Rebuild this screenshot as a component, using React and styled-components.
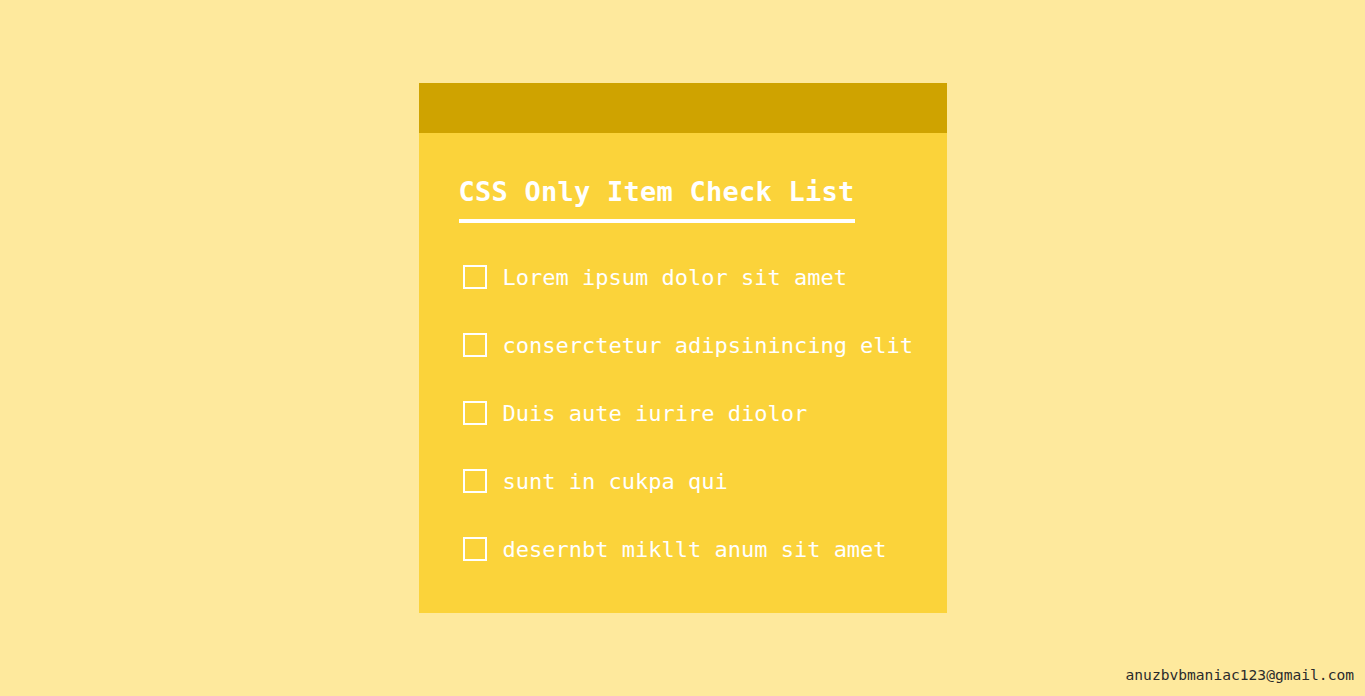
import React from "react";
import styled, { createGlobalStyle } from "styled-components";

const Global = createGlobalStyle`
  html, body { margin: 0; padding: 0; }
  body { background: #fee99d; font-family: "DejaVu Sans Mono", "Liberation Mono", monospace; }
`;

const Page = styled.div`
  height: 696px;
  display: grid;
  grid-template-rows: 1fr auto 1fr;
  justify-items: center;
`;

const Card = styled.section`
  grid-row: 2;
  width: 528px;
  background: #fbd33a;
  display: flex;
  flex-direction: column;
`;

const CardHeader = styled.div`
  height: 50px;
  background: #cfa300;
`;

const CardBody = styled.div`
  padding: 40px 40px 30px 40px;
  display: flex;
  flex-direction: column;
  align-items: flex-start;
`;

const Title = styled.h1`
  margin: 0;
  font-size: 27px;
  line-height: 37px;
  font-weight: bold;
  letter-spacing: 0.25px;
  color: #ffffff;
  padding-bottom: 9px;
  border-bottom: 4px solid #ffffff;
  white-space: nowrap;
`;

const List = styled.ul`
  list-style: none;
  margin: 20px 0 0 4px;
  padding: 0;
`;

const Row = styled.li`
  height: 68px;
  display: flex;
  align-items: center;
  gap: 16px;
`;

const Box = styled.input`
  appearance: none;
  margin: 0;
  width: 24px;
  height: 24px;
  border: 2px solid #ffffff;
  background: transparent;
  box-sizing: border-box;
  flex: none;
  &:checked { background: #ffffff; }
`;

const Label = styled.label`
  font-size: 22px;
  color: #ffffff;
  white-space: nowrap;
  cursor: pointer;
`;

const Footer = styled.div`
  grid-row: 3;
  justify-self: end;
  align-self: end;
  padding: 0 11px 13px 0;
  font-size: 14.6px;
  color: #2b2b2b;
`;

const items = [
  "Lorem ipsum dolor sit amet",
  "conserctetur adipsinincing elit",
  "Duis aute iurire diolor",
  "sunt in cukpa qui",
  "desernbt mikllt anum sit amet",
];

export default function App() {
  return (
    <>
      <Global />
      <Page>
        <Card>
          <CardHeader />
          <CardBody>
            <Title>CSS Only Item Check List</Title>
            <List>
              {items.map((t, i) => (
                <Row key={i}>
                  <Box type="checkbox" id={`item-${i}`} />
                  <Label htmlFor={`item-${i}`}>{t}</Label>
                </Row>
              ))}
            </List>
          </CardBody>
        </Card>
        <Footer>anuzbvbmaniac123@gmail.com</Footer>
      </Page>
    </>
  );
}
